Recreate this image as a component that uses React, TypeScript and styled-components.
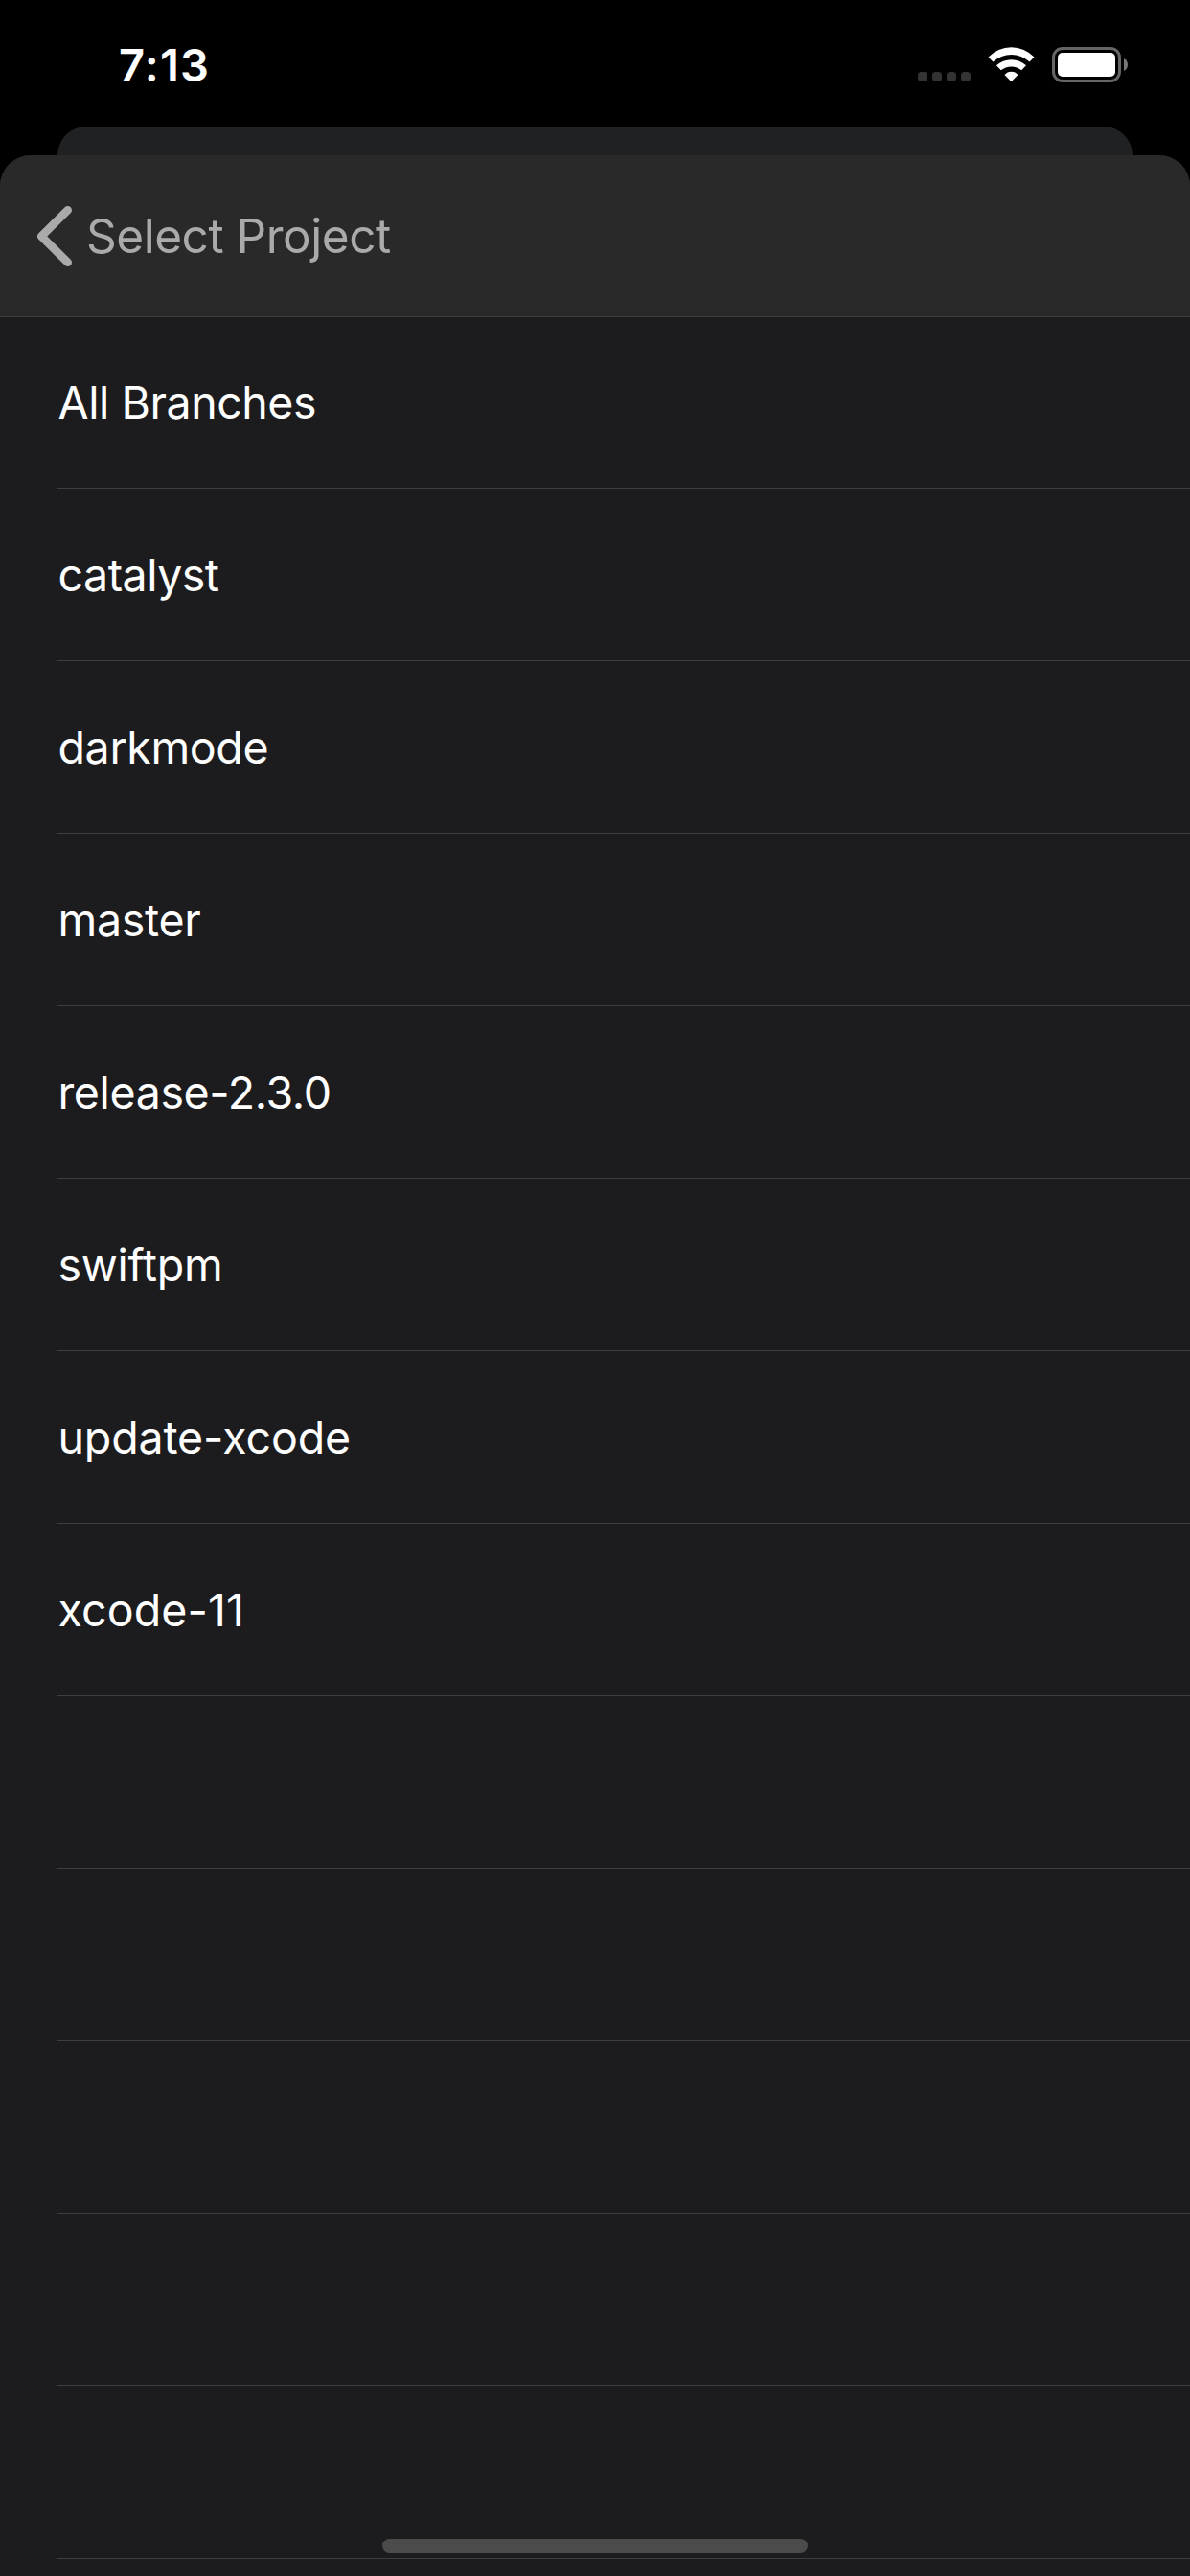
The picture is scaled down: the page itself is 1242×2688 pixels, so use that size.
import React from 'react';
import styled, { createGlobalStyle } from 'styled-components';

const GlobalStyle = createGlobalStyle`
  *, *::before, *::after { box-sizing: border-box; }
  html, body { margin: 0; padding: 0; background: #000; }
  body {
    font-family: Inter, "Liberation Sans", sans-serif;
    color: #fff;
  }
`;

const Screen = styled.div`
  display: flex;
  flex-direction: column;
  width: 1242px;
  height: 2688px;
  overflow: hidden;
  position: relative;
  background: #000;
`;

const StatusBar = styled.div`
  flex: none;
  display: flex;
  align-items: center;
  justify-content: space-between;
  height: 132px;
  padding: 4px 65px 0 124px;
`;

const Clock = styled.time`
  font-size: 47px;
  font-weight: 600;
  letter-spacing: 1.2px;
  line-height: 58px;
`;

const StatusIcons = styled.div`
  display: flex;
  align-items: center;
  margin-bottom: 1px;

  svg { display: block; }
`;

const SignalDots = styled.div`
  display: flex;
  gap: 5px;
  margin: 25px 18px 0 0;
`;

const SignalDot = styled.span`
  width: 10px;
  height: 10px;
  border-radius: 3.5px;
  background: #333;
`;

const WifiIcon = styled.svg`
  margin-right: 18px;
`;

const SheetBehind = styled.div`
  flex: none;
  height: 30px;
  margin: 0 60px;
  border-radius: 30px 30px 0 0;
  background: #202122;
`;

const Sheet = styled.main`
  flex: 1;
  display: flex;
  flex-direction: column;
  min-height: 0;
  overflow: hidden;
  border-radius: 32px 32px 0 0;
  background: #1c1c1e;
`;

const NavBar = styled.header`
  position: relative;
  z-index: 1;
  flex: none;
  display: flex;
  align-items: center;
  height: 169px;
  padding-left: 36px;
  border-bottom: 1px solid #3d3d3f;
  background: #292929;
`;

const BackButton = styled.button`
  display: flex;
  align-items: center;
  gap: 12px;
  padding: 0;
  border: 0;
  background: none;
  color: #aaa;
  font: inherit;
  font-size: 49.5px;
  line-height: 60px;
  letter-spacing: -0.47px;

  svg { display: block; }
`;

const BranchList = styled.ul`
  flex: none;
  margin: -1px 0 0;
  padding: 0 0 0 60px;
  list-style: none;
`;

const BranchRow = styled.li<{ $tracking?: number }>`
  display: flex;
  align-items: center;
  height: 180px;
  padding: 1px 0 0 0.5px;
  border-bottom: 1px solid #3d3d3f;
  font-size: 46.5px;
  line-height: 56px;
  letter-spacing: ${({ $tracking = 0 }) => $tracking}px;
`;

const HomeIndicator = styled.div`
  position: absolute;
  left: 399px;
  bottom: 24px;
  width: 444px;
  height: 15px;
  border-radius: 8px;
  background: #4b4b4b;
`;

const branches = [
  { name: 'All Branches', tracking: -0.44 },
  { name: 'catalyst', tracking: -0.5 },
  { name: 'darkmode', tracking: -0.35 },
  { name: 'master', tracking: -0.31 },
  { name: 'release-2.3.0', tracking: -0.37 },
  { name: 'swiftpm', tracking: -0.28 },
  { name: 'update-xcode', tracking: -0.14 },
  { name: 'xcode-11', tracking: 0.12 },
];

const emptyRows = [0, 1, 2, 3, 4];

export default function App() {
  return (
    <>
      <GlobalStyle />
      <Screen>
        <StatusBar>
          <Clock>7:13</Clock>
          <StatusIcons>
            <SignalDots>
              <SignalDot />
              <SignalDot />
              <SignalDot />
              <SignalDot />
            </SignalDots>
            <WifiIcon width="49" height="37" viewBox="0 0 49 37" fill="#fff">
              <path d="M0.6 10.5 A33 33 0 0 1 48.4 10.5 L43.6 15.4 A28.5 28.5 0 0 0 5.4 15.4 Z" />
              <path d="M9 19.2 A23 23 0 0 1 40 19.2 L35.2 24.3 A17 17 0 0 0 13.8 24.3 Z" />
              <path d="M17.5 29.1 A9 9 0 0 1 31.5 29.1 L25.2 35.6 Q24.5 36.2 23.8 35.6 Z" />
            </WifiIcon>
            <svg width="79" height="37" viewBox="0 0 79 37">
              <rect x="1.5" y="1.5" width="69" height="34" rx="9.5" fill="none" stroke="#666" strokeWidth="3" />
              <rect x="6" y="6" width="60" height="25" rx="5" fill="#fff" />
              <path d="M75 12 C78 13.5 79 16 79 18.5 C79 21 78 23.5 75 25 Z" fill="#777" />
            </svg>
          </StatusIcons>
        </StatusBar>
        <SheetBehind />
        <Sheet>
          <NavBar>
            <BackButton type="button">
              <svg width="42" height="68" viewBox="0 0 42 68" fill="none" stroke="#aaa" strokeWidth="8.6" strokeLinecap="round" strokeLinejoin="round">
                <path d="M34.7 7.2 L7.2 34.5 L34.7 61.8" />
              </svg>
              Select Project
            </BackButton>
          </NavBar>
          <BranchList>
            {branches.map(({ name, tracking }) => (
              <BranchRow key={name} $tracking={tracking}>
                {name}
              </BranchRow>
            ))}
            {emptyRows.map((row) => (
              <BranchRow key={row} aria-hidden="true" />
            ))}
          </BranchList>
        </Sheet>
        <HomeIndicator />
      </Screen>
    </>
  );
}
